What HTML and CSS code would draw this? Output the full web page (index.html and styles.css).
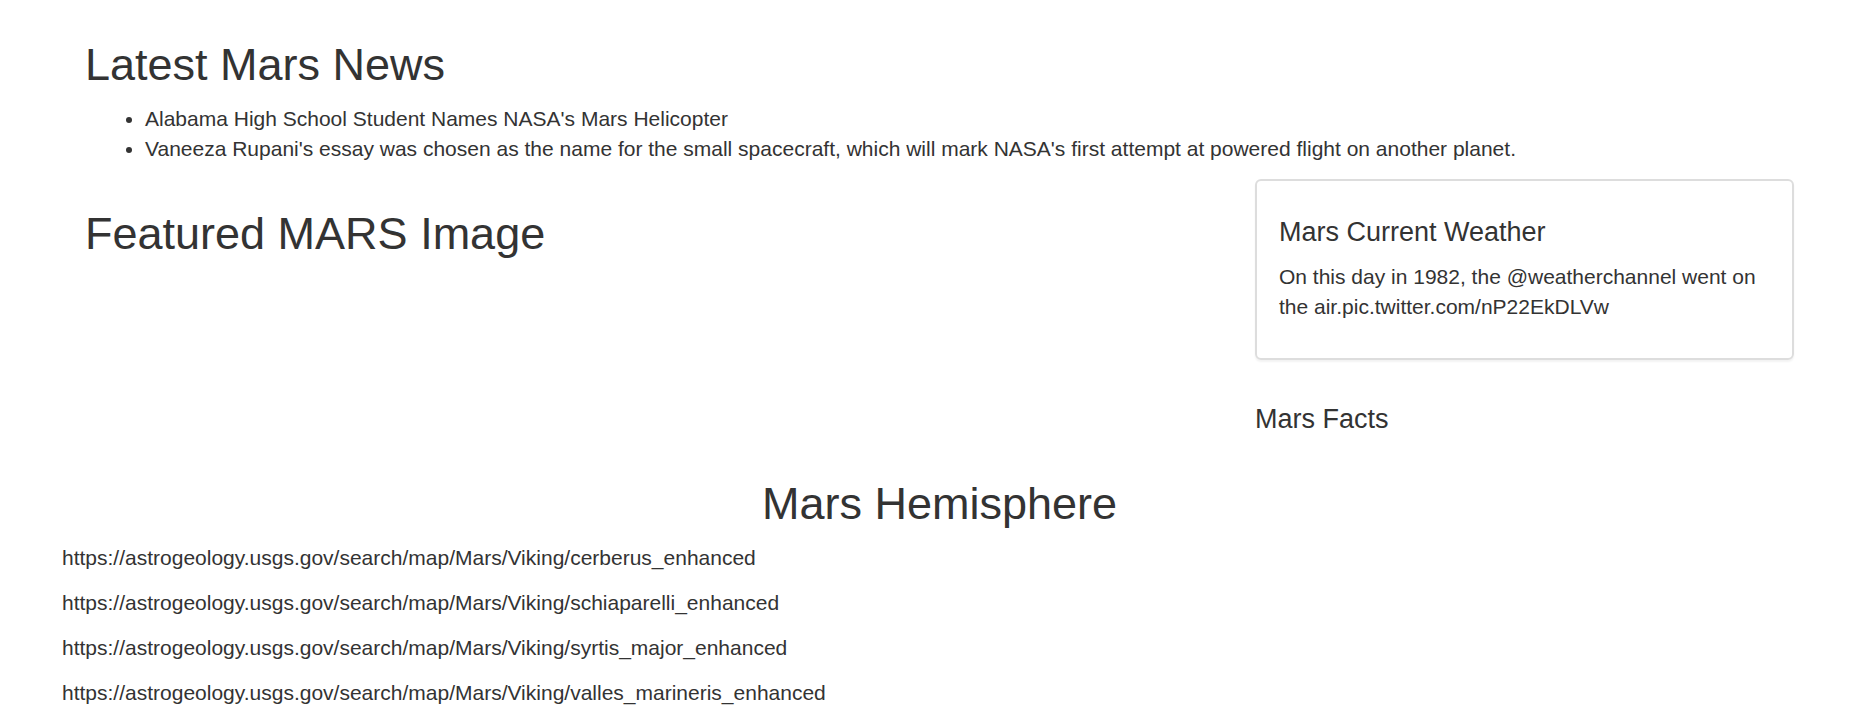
FILE: index.html
```html
<!DOCTYPE html>
<html lang="en">
<head>
<meta charset="utf-8">
<meta name="viewport" content="width=device-width, initial-scale=1">
<title>Mission to Mars</title>
<link rel="stylesheet" href="styles.css">
</head>
<body>
<main class="container">
  <section class="news">
    <h2 class="heading">Latest Mars News</h2>
    <ul class="news-list">
      <li>Alabama High School Student Names NASA's Mars Helicopter</li>
      <li>Vaneeza Rupani's essay was chosen as the name for the small spacecraft, which will mark NASA's first attempt at powered flight on another planet.</li>
    </ul>
  </section>
  <div class="row">
    <section class="featured">
      <h2 class="heading">Featured MARS Image</h2>
    </section>
    <aside class="side">
      <section class="panel">
        <h4 class="subheading">Mars Current Weather</h4>
        <p class="text">On this day in 1982, the @weatherchannel went on the air.pic.twitter.com/nP22EkDLVw</p>
      </section>
      <section class="facts">
        <h4 class="subheading">Mars Facts</h4>
      </section>
    </aside>
  </div>
  <section class="hemispheres">
    <h2 class="heading heading-center">Mars Hemisphere</h2>
    <p class="text">https://astrogeology.usgs.gov/search/map/Mars/Viking/cerberus_enhanced</p>
    <p class="text">https://astrogeology.usgs.gov/search/map/Mars/Viking/schiaparelli_enhanced</p>
    <p class="text">https://astrogeology.usgs.gov/search/map/Mars/Viking/syrtis_major_enhanced</p>
    <p class="text">https://astrogeology.usgs.gov/search/map/Mars/Viking/valles_marineris_enhanced</p>
  </section>
</main>
</body>
</html>
```
FILE: styles.css
```css
* {
  box-sizing: border-box;
}

body {
  margin: 0;
  background: #fff;
  color: #333;
  font-family: "Liberation Sans", Arial, sans-serif;
  font-size: 21px;
  line-height: 30px;
}

.container {
  padding: 10px 37px 0 62px;
}

.heading {
  margin: 0;
  padding: 30px 0 14px;
  font-size: 45px;
  font-weight: 400;
  line-height: 50px;
}

.heading-center {
  text-align: center;
}

.subheading {
  margin: 0;
  padding: 15px 0;
  font-size: 27px;
  font-weight: 400;
  line-height: 29px;
}

.text {
  margin: 0 0 15px;
}

.news {
  padding: 0 23px;
}

.news-list {
  margin: 0 0 15px;
  padding-left: 60px;
}

.row {
  display: flex;
}

.featured,
.side {
  padding: 0 23px;
}

.featured {
  flex: 0 0 66.6667%;
}

.side {
  flex: 1;
}

.panel {
  margin-bottom: 30px;
  padding: 22px 22px 21px;
  border: 2px solid #ddd;
  border-radius: 6px;
  box-shadow: 0 2px 2px rgba(0, 0, 0, 0.05);
}
```
